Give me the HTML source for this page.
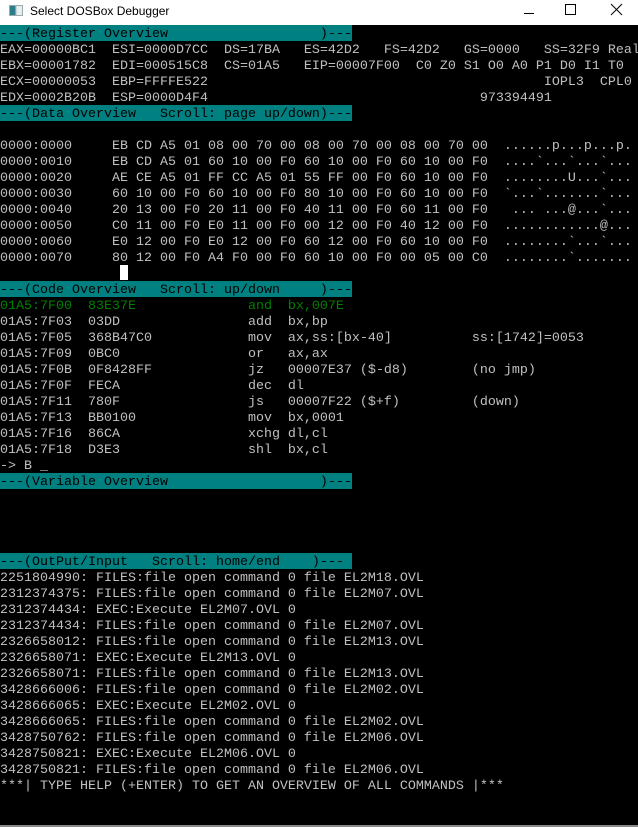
<!DOCTYPE html>
<html><head><meta charset="utf-8"><style>
*{margin:0;padding:0;box-sizing:border-box}
html,body{width:638px;height:827px;overflow:hidden;background:#000}
#tb{position:absolute;left:0;top:0;width:638px;height:25px;background:#fff}
#tb .t{position:absolute;left:30px;top:4px;font:12px "Liberation Sans",sans-serif;color:#000}
#tb .ic{position:absolute;left:9px;top:5px;width:14px;height:11px;border:1px solid #9aa;background:linear-gradient(90deg,#2a7d8a 0 45%,#c8d4d8 45% 60%,#e8eef0 60%)}
pre{position:absolute;left:0;top:27px;font-family:"Liberation Mono",monospace;font-size:13.333px;line-height:16px;color:#c0c0c0;white-space:pre}
.b{background:#008080;color:#000;display:inline-block;width:352px;height:16px;vertical-align:top;position:relative;top:-2px;padding-top:2px;line-height:16px;overflow:hidden}
.g{color:#008000}
#cur{position:absolute;left:120px;top:265px;width:8px;height:15px;background:#fff}
#bot{position:absolute;left:0;top:825px;width:638px;height:2px;background:#888}
</style></head><body>
<div id="tb"><div class="ic"></div><div class="t">Select DOSBox Debugger</div>
<svg style="position:absolute;left:522px;top:6px" width="14" height="14"><path d="M2 7.5h10" stroke="#000" stroke-width="1"/></svg>
<svg style="position:absolute;left:564px;top:3px" width="14" height="14"><rect x="1.5" y="1.5" width="10" height="10" fill="none" stroke="#000"/></svg>
<svg style="position:absolute;left:610px;top:3px" width="14" height="14"><path d="M1 1L12 12M12 1L1 12" stroke="#000"/></svg>
</div>
<pre><span class="b">---(Register Overview                   )---</span>
EAX=00000BC1  ESI=0000D7CC  DS=17BA   ES=42D2   FS=42D2   GS=0000   SS=32F9 Real
EBX=00001782  EDI=000515C8  CS=01A5   EIP=00007F00  C0 Z0 S1 O0 A0 P1 D0 I1 T0
ECX=00000053  EBP=FFFFE522                                          IOPL3  CPL0
EDX=0002B20B  ESP=0000D4F4                                  973394491
<span class="b">---(Data Overview   Scroll: page up/down)---</span>

0000:0000     EB CD A5 01 08 00 70 00 08 00 70 00 08 00 70 00  ......p...p...p.
0000:0010     EB CD A5 01 60 10 00 F0 60 10 00 F0 60 10 00 F0  ....`...`...`...
0000:0020     AE CE A5 01 FF CC A5 01 55 FF 00 F0 60 10 00 F0  ........U...`...
0000:0030     60 10 00 F0 60 10 00 F0 80 10 00 F0 60 10 00 F0  `...`.......`...
0000:0040     20 13 00 F0 20 11 00 F0 40 11 00 F0 60 11 00 F0   ... ...@...`...
0000:0050     C0 11 00 F0 E0 11 00 F0 00 12 00 F0 40 12 00 F0  ............@...
0000:0060     E0 12 00 F0 E0 12 00 F0 60 12 00 F0 60 10 00 F0  ........`...`...
0000:0070     80 12 00 F0 A4 F0 00 F0 60 10 00 F0 00 05 00 C0  ........`.......

<span class="b">---(Code Overview   Scroll: up/down     )---</span>
<span class="g">01A5:7F00  83E37E              and  bx,007E</span>
01A5:7F03  03DD                add  bx,bp
01A5:7F05  368B47C0            mov  ax,ss:[bx-40]          ss:[1742]=0053
01A5:7F09  0BC0                or   ax,ax
01A5:7F0B  0F8428FF            jz   00007E37 ($-d8)        (no jmp)
01A5:7F0F  FECA                dec  dl
01A5:7F11  780F                js   00007F22 ($+f)         (down)
01A5:7F13  BB0100              mov  bx,0001
01A5:7F16  86CA                xchg dl,cl
01A5:7F18  D3E3                shl  bx,cl
-&gt; B _
<span class="b">---(Variable Overview                   )---</span>




<span class="b">---(OutPut/Input   Scroll: home/end    )---</span>
2251804990: FILES:file open command 0 file EL2M18.OVL
2312374375: FILES:file open command 0 file EL2M07.OVL
2312374434: EXEC:Execute EL2M07.OVL 0
2312374434: FILES:file open command 0 file EL2M07.OVL
2326658012: FILES:file open command 0 file EL2M13.OVL
2326658071: EXEC:Execute EL2M13.OVL 0
2326658071: FILES:file open command 0 file EL2M13.OVL
3428666006: FILES:file open command 0 file EL2M02.OVL
3428666065: EXEC:Execute EL2M02.OVL 0
3428666065: FILES:file open command 0 file EL2M02.OVL
3428750762: FILES:file open command 0 file EL2M06.OVL
3428750821: EXEC:Execute EL2M06.OVL 0
3428750821: FILES:file open command 0 file EL2M06.OVL
***| TYPE HELP (+ENTER) TO GET AN OVERVIEW OF ALL COMMANDS |***</pre>
<div id="cur"></div>
<div id="bot"></div>
</body></html>
